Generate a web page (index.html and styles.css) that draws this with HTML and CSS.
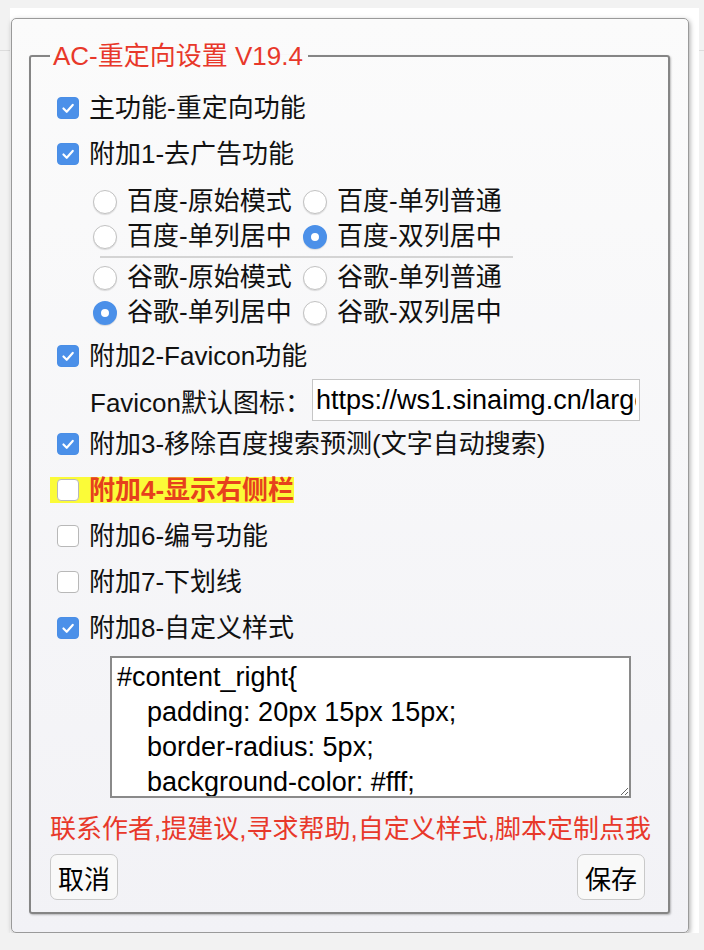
FILE: index.html
```html
<!DOCTYPE html>
<html lang="zh-CN">
<head>
  <meta charset="UTF-8" />
  <meta name="viewport" content="width=device-width, initial-scale=1.0"/>
  <title>AC-重定向设置</title>

  <link rel="stylesheet" href="styles.css">
</head>

<body>
  <div class="fondo">
    <div class="panel">
      <fieldset class="ajustes">
        <legend>AC-重定向设置 V19.4</legend>

        <div class="fila">
          <label class="opcion"><span class="caja on"><svg viewBox="0 0 22 22"><path d="M6 11.5l3.6 3.6L16.2 7.6"/></svg></span>主功能-重定向功能</label>
        </div>
        <div class="fila">
          <label class="opcion"><span class="caja on"><svg viewBox="0 0 22 22"><path d="M6 11.5l3.6 3.6L16.2 7.6"/></svg></span>附加1-去广告功能</label>
        </div>

        <!-- grupo de radios -->
        <div class="radios">
          <label class="radio"><span class="circulo"></span>百度-原始模式</label>
          <label class="radio"><span class="circulo"></span>百度-单列普通</label>
          <label class="radio"><span class="circulo"></span>百度-单列居中</label>
          <label class="radio"><span class="circulo on"></span>百度-双列居中</label>
        </div>
        <hr class="separador">
        <div class="radios segundo">
          <label class="radio"><span class="circulo"></span>谷歌-原始模式</label>
          <label class="radio"><span class="circulo"></span>谷歌-单列普通</label>
          <label class="radio"><span class="circulo on"></span>谷歌-单列居中</label>
          <label class="radio"><span class="circulo"></span>谷歌-双列居中</label>
        </div>

        <div class="fila">
          <label class="opcion"><span class="caja on"><svg viewBox="0 0 22 22"><path d="M6 11.5l3.6 3.6L16.2 7.6"/></svg></span>附加2-Favicon功能</label>
        </div>
        <div class="fila favicon">
          <span>Favicon默认图标：</span>
          <input class="campo" type="text" value="https://ws1.sinaimg.cn/large/6a155794ly1g1r2x0x9pkj200w00w0sh.jpg">
        </div>
        <div class="fila">
          <label class="opcion"><span class="caja on"><svg viewBox="0 0 22 22"><path d="M6 11.5l3.6 3.6L16.2 7.6"/></svg></span>附加3-移除百度搜索预测(文字自动搜索)</label>
        </div>
        <div class="fila">
          <label class="opcion resaltado"><span class="caja"></span>附加4-显示右侧栏</label>
        </div>
        <div class="fila">
          <label class="opcion"><span class="caja"></span>附加6-编号功能</label>
        </div>
        <div class="fila">
          <label class="opcion"><span class="caja"></span>附加7-下划线</label>
        </div>
        <div class="fila">
          <label class="opcion"><span class="caja on"><svg viewBox="0 0 22 22"><path d="M6 11.5l3.6 3.6L16.2 7.6"/></svg></span>附加8-自定义样式</label>
        </div>

        <textarea class="estilos">#content_right{
    padding: 20px 15px 15px;
    border-radius: 5px;
    background-color: #fff;
}</textarea>

        <div class="contacto">联系作者,提建议,寻求帮助,自定义样式,脚本定制点我</div>

        <div class="botones">
          <button>取消</button>
          <button>保存</button>
        </div>
      </fieldset>
    </div>
  </div>
</body>
</html>
```

FILE: styles.css
```css
/* ventana de ajustes */

body {
  margin: 0;
  padding-top: 8px;
  background: #f2f2f2;
  font-family: "Liberation Sans", "Noto Sans CJK SC", sans-serif;
  font-size: 26px;
  color: #111;
  position: relative;
}

/* linea de la pagina que queda detras */
body::before {
  content: "";
  position: absolute;
  left: 0;
  right: 0;
  top: 50px;
  border-top: 1px solid #dcdcdc;
}

.fondo {
  position: relative;
  width: 689px;
  margin-left: 10px;
  padding: 10px 0 0 1px;
  background: #fff;
  box-sizing: border-box;
}

.panel {
  width: 678px;
  box-sizing: border-box;
  padding: 22px 18px 18px 17px;
  border: 1px solid #9a9a9a;
  border-radius: 5px;
  background: linear-gradient(#fbfbfb, #f2f2f6);
  box-shadow: 1px 2px 5px rgba(0,0,0,0.35);
}

.ajustes {
  min-width: 0;
  margin: 0;
  padding: 14px 23px 12px 19px;
  border: 2px solid #858585;
  border-radius: 3px;
  box-shadow: 1px 1px 2px rgba(0,0,0,0.25);
}

legend {
  padding: 0 5px 0 3px;
  line-height: 30px;
  color: #e8382a;
}

.fila {
  display: flex;
  align-items: center;
  height: 46px;
}

.opcion {
  display: inline-flex;
  align-items: center;
  gap: 10px;
  padding-left: 7px;
  line-height: 26px;
}

.resaltado {
  background: #fbfb38;
  color: #e6401d;
  font-weight: bold;
}

.caja {
  width: 22px;
  height: 22px;
  box-sizing: border-box;
  border: 1px solid #b8b8b8;
  border-radius: 4px;
  background: #fff;
  flex: none;
}

.caja.on {
  border-color: #4a8ee6;
  background: #4b90e9;
}

.caja svg {
  display: block;
  width: 20px;
  height: 20px;
  fill: none;
  stroke: #fff;
  stroke-width: 2.4;
  stroke-linecap: round;
  stroke-linejoin: round;
}

.radios {
  display: grid;
  grid-template-columns: 210px 210px;
  grid-auto-rows: 35px;
  margin: 7px 0 0 43px;
}

.radios.segundo {
  margin-top: 2px;
  margin-bottom: 3px;
}

.radio {
  display: flex;
  align-items: center;
  gap: 10px;
  line-height: 35px;
}

.circulo {
  width: 24px;
  height: 24px;
  box-sizing: border-box;
  border: 1px solid #c2c2c2;
  border-radius: 50%;
  background: #fff;
  box-shadow: 0 1px 1px rgba(0,0,0,0.12);
  flex: none;
}

.circulo.on {
  border: 8px solid #4b90e9;
}

.separador {
  width: 413px;
  margin: 2px 0 0 50px;
  border: 0;
  border-top: 2px solid #d4d4d4;
}

.favicon {
  height: 42px;
  padding-left: 40px;
}

.campo {
  width: 328px;
  height: 42px;
  box-sizing: border-box;
  margin: 0 0 0 1px;
  padding: 0 3px;
  border: 1px solid #c6c6c6;
  background: #fff;
  font-family: "Liberation Sans", sans-serif;
  font-size: 27px;
  color: #000;
}

.estilos {
  display: block;
  width: 521px;
  height: 142px;
  box-sizing: border-box;
  margin: 5px 0 0 60px;
  padding: 2px 5px;
  border: 2px solid #8a8a8a;
  background: #fff;
  font-family: "Liberation Sans", sans-serif;
  font-size: 27px;
  line-height: 35px;
  color: #000;
  overflow: hidden;
  resize: both;
}

.contacto {
  margin-top: 13px;
  line-height: 36px;
  white-space: nowrap;
  color: #e8382a;
  cursor: pointer;
}

.botones {
  display: flex;
  justify-content: space-between;
  margin-top: 7px;
}

.botones button {
  height: 46px;
  padding: 0 7px;
  border: 1px solid #c9c9c9;
  border-radius: 7px;
  background: #f9f9f9;
  font-family: "Noto Sans CJK SC", sans-serif;
  font-size: 26px;
  color: #000;
  cursor: pointer;
}
```
